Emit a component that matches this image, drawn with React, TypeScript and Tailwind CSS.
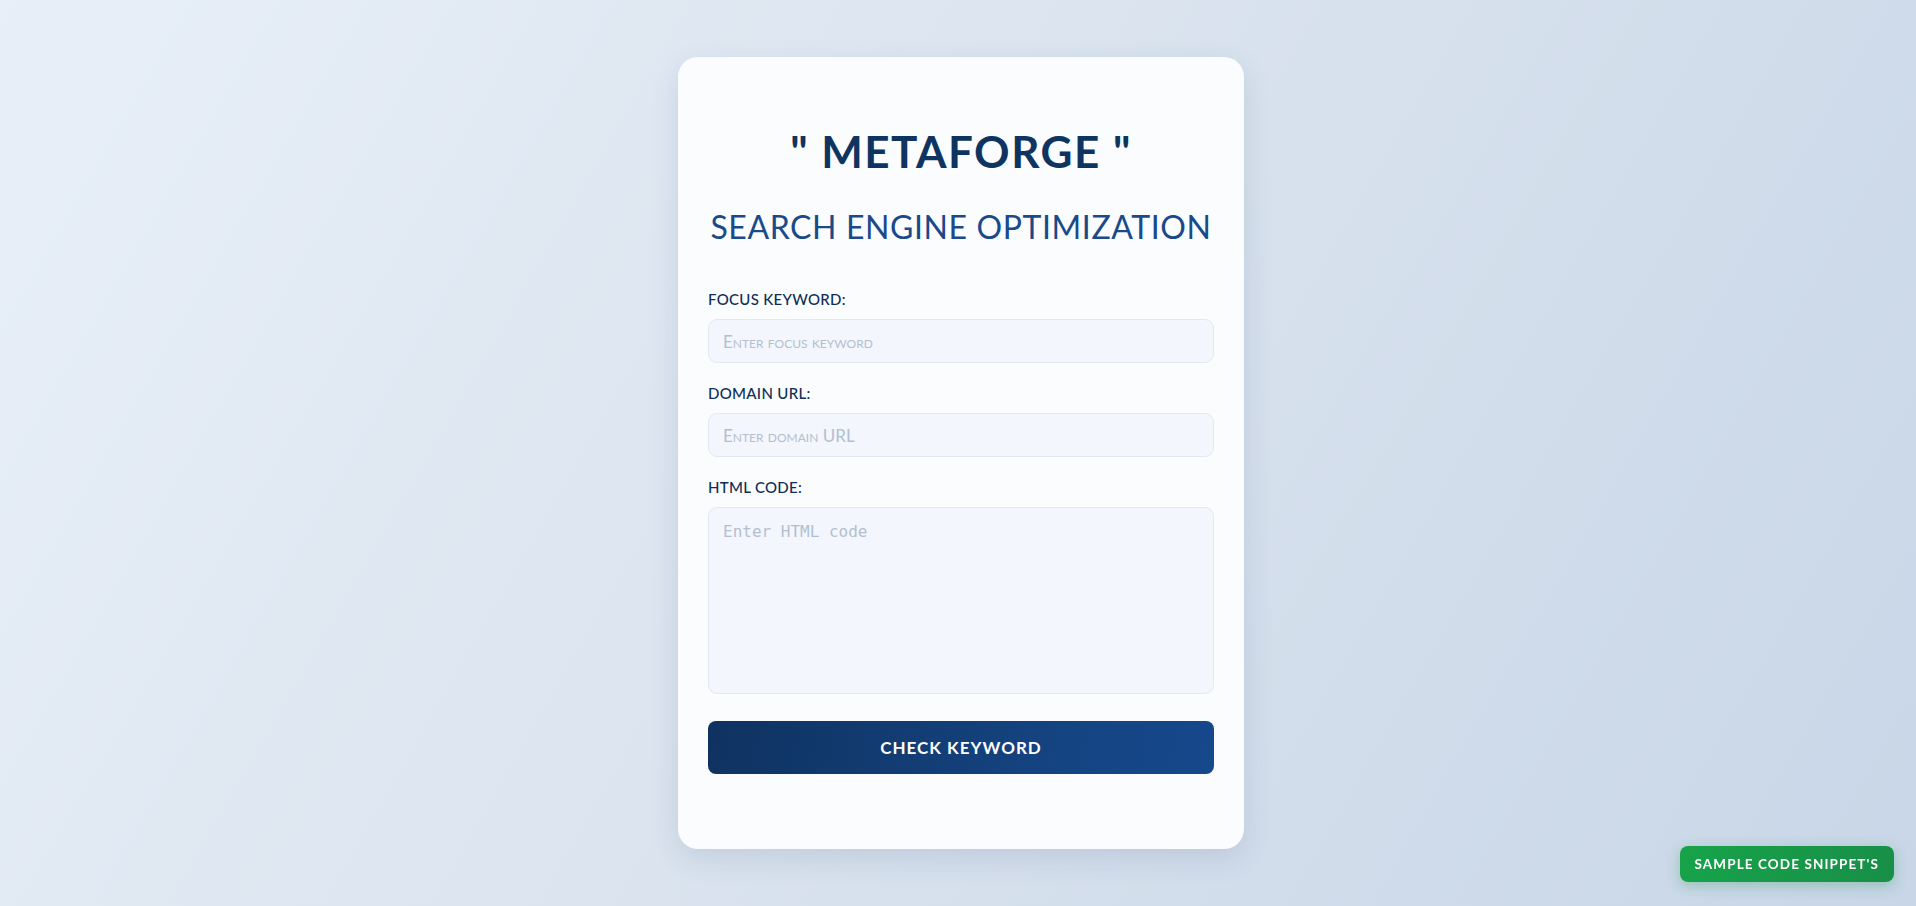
import { useState } from 'react';

export default function App() {
  const [keyword, setKeyword] = useState('');
  const [domain, setDomain] = useState('');
  const [html, setHtml] = useState('');

  return (
    <div className="min-h-screen w-full flex items-center justify-center bg-[linear-gradient(120deg,#e8eff8_0%,#dbe4ef_45%,#c8d6e7_100%)] font-['Lato','Open_Sans',sans-serif]">
      <div className="ml-[6px] w-[566px] px-[30px] pt-16 pb-[75px] rounded-[20px] bg-[#fafcfe] shadow-[0_10px_30px_rgba(30,60,110,0.12)]">
        <h1 className="text-center text-[44px] leading-[60px] font-bold tracking-[1.5px] text-[#0f3460] whitespace-nowrap">
          " METAFORGE "
        </h1>
        <h2 className="mt-[26px] text-center text-[32px] leading-[40px] font-normal tracking-[0.6px] text-[#1a4a8a] whitespace-nowrap">
          SEARCH ENGINE OPTIMIZATION
        </h2>

        <label className="block mt-[42px] text-[15px] leading-5 font-medium tracking-[0.3px] text-[#0f2d55]">FOCUS KEYWORD:</label>
        <input
          value={keyword}
          onChange={e => setKeyword(e.target.value)}
          placeholder="Enter focus keyword"
          className="mt-[10px] w-full h-[44px] px-[14px] rounded-[9px] border border-[#e4e9f1] bg-[#f3f6fc] text-[17px] text-[#0f2d55] placeholder:text-[#b3bfcf] outline-none [font-variant-caps:small-caps]"
        />

        <label className="block mt-5 text-[15px] leading-5 font-medium tracking-[0.3px] text-[#0f2d55]">DOMAIN URL:</label>
        <input
          value={domain}
          onChange={e => setDomain(e.target.value)}
          placeholder="Enter domain URL"
          className="mt-[10px] w-full h-[44px] px-[14px] rounded-[9px] border border-[#e4e9f1] bg-[#f3f6fc] text-[17px] text-[#0f2d55] placeholder:text-[#b3bfcf] outline-none [font-variant-caps:small-caps]"
        />

        <label className="block mt-5 text-[15px] leading-5 font-medium tracking-[0.3px] text-[#0f2d55]">HTML CODE:</label>
        <textarea
          value={html}
          onChange={e => setHtml(e.target.value)}
          placeholder="Enter HTML code"
          className="block mt-[10px] w-full h-[187px] px-[14px] py-3 resize-none rounded-[9px] border border-[#e4e9f1] bg-[#f3f6fc] text-[16px] leading-6 text-[#0f2d55] placeholder:text-[#b3bfcf] outline-none font-['DejaVu_Sans_Mono',monospace]"
        />

        <button className="mt-[27px] w-full h-[53px] rounded-lg bg-[linear-gradient(100deg,#0f3260_0%,#14427e_60%,#16488c_100%)] text-white text-[17px] font-bold tracking-[1px]">
          CHECK KEYWORD
        </button>
      </div>

      <button className="fixed right-[22px] bottom-6 h-9 px-[15px] rounded-lg bg-[linear-gradient(100deg,#17a34a_0%,#188f48_100%)] text-white text-[13.5px] font-bold tracking-[1.1px] shadow-[0_4px_14px_rgba(22,140,70,0.3)]">
        SAMPLE CODE SNIPPET'S
      </button>
    </div>
  );
}
